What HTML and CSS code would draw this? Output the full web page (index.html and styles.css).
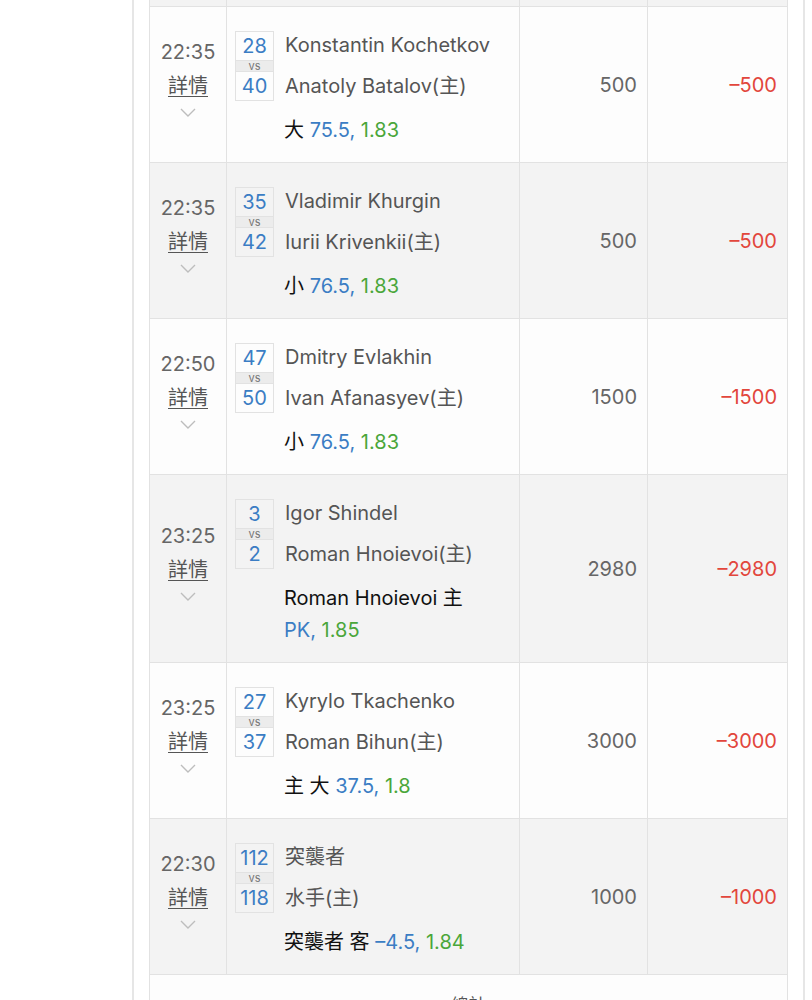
FILE: index.html
```html
<!DOCTYPE html>
<html lang="zh-Hant">
<head>
<meta charset="utf-8">
<title>注單</title>
<link rel="stylesheet" href="styles.css">
</head>
<body>
<div class="page">
  <div class="table">
    <div class="row head">
      <div class="c"></div><div class="c"></div><div class="c"></div><div class="c"></div>
    </div>

    <div class="row">
      <div class="c time"><span class="t">22:35</span><a class="d">詳情</a><span class="chev"><svg width="16" height="9" viewBox="0 0 16 9"><polyline points="1,1 8,8 15,1" fill="none" stroke="#bdbdbd" stroke-width="1.4"/></svg></span></div>
      <div class="c match">
        <div class="top">
          <div class="score"><span class="n">28</span><span class="vs">vs</span><span class="n">40</span></div>
          <div class="names"><div>Konstantin Kochetkov</div><div>Anatoly Batalov(主)</div></div>
        </div>
        <div class="bet"><span class="pick">大</span> <span class="odds"><span class="blue">75.5,</span> <span class="green">1.83</span></span></div>
      </div>
      <div class="c amt">500</div>
      <div class="c res">–500</div>
    </div>

    <div class="row alt">
      <div class="c time"><span class="t">22:35</span><a class="d">詳情</a><span class="chev"><svg width="16" height="9" viewBox="0 0 16 9"><polyline points="1,1 8,8 15,1" fill="none" stroke="#bdbdbd" stroke-width="1.4"/></svg></span></div>
      <div class="c match">
        <div class="top">
          <div class="score"><span class="n">35</span><span class="vs">vs</span><span class="n">42</span></div>
          <div class="names"><div>Vladimir Khurgin</div><div>Iurii Krivenkii(主)</div></div>
        </div>
        <div class="bet"><span class="pick">小</span> <span class="odds"><span class="blue">76.5,</span> <span class="green">1.83</span></span></div>
      </div>
      <div class="c amt">500</div>
      <div class="c res">–500</div>
    </div>

    <div class="row">
      <div class="c time"><span class="t">22:50</span><a class="d">詳情</a><span class="chev"><svg width="16" height="9" viewBox="0 0 16 9"><polyline points="1,1 8,8 15,1" fill="none" stroke="#bdbdbd" stroke-width="1.4"/></svg></span></div>
      <div class="c match">
        <div class="top">
          <div class="score"><span class="n">47</span><span class="vs">vs</span><span class="n">50</span></div>
          <div class="names"><div>Dmitry Evlakhin</div><div>Ivan Afanasyev(主)</div></div>
        </div>
        <div class="bet"><span class="pick">小</span> <span class="odds"><span class="blue">76.5,</span> <span class="green">1.83</span></span></div>
      </div>
      <div class="c amt">1500</div>
      <div class="c res">–1500</div>
    </div>

    <div class="row alt">
      <div class="c time"><span class="t">23:25</span><a class="d">詳情</a><span class="chev"><svg width="16" height="9" viewBox="0 0 16 9"><polyline points="1,1 8,8 15,1" fill="none" stroke="#bdbdbd" stroke-width="1.4"/></svg></span></div>
      <div class="c match">
        <div class="top">
          <div class="score"><span class="n">3</span><span class="vs">vs</span><span class="n">2</span></div>
          <div class="names"><div>Igor Shindel</div><div>Roman Hnoievoi(主)</div></div>
        </div>
        <div class="bet"><span class="pick">Roman Hnoievoi 主</span> <span class="odds"><span class="blue">PK,</span> <span class="green">1.85</span></span></div>
      </div>
      <div class="c amt">2980</div>
      <div class="c res">–2980</div>
    </div>

    <div class="row">
      <div class="c time"><span class="t">23:25</span><a class="d">詳情</a><span class="chev"><svg width="16" height="9" viewBox="0 0 16 9"><polyline points="1,1 8,8 15,1" fill="none" stroke="#bdbdbd" stroke-width="1.4"/></svg></span></div>
      <div class="c match">
        <div class="top">
          <div class="score"><span class="n">27</span><span class="vs">vs</span><span class="n">37</span></div>
          <div class="names"><div>Kyrylo Tkachenko</div><div>Roman Bihun(主)</div></div>
        </div>
        <div class="bet"><span class="pick">主 大</span> <span class="odds"><span class="blue">37.5,</span> <span class="green">1.8</span></span></div>
      </div>
      <div class="c amt">3000</div>
      <div class="c res">–3000</div>
    </div>

    <div class="row alt">
      <div class="c time"><span class="t">22:30</span><a class="d">詳情</a><span class="chev"><svg width="16" height="9" viewBox="0 0 16 9"><polyline points="1,1 8,8 15,1" fill="none" stroke="#bdbdbd" stroke-width="1.4"/></svg></span></div>
      <div class="c match">
        <div class="top">
          <div class="score"><span class="n">112</span><span class="vs">vs</span><span class="n">118</span></div>
          <div class="names"><div>突襲者</div><div>水手(主)</div></div>
        </div>
        <div class="bet"><span class="pick">突襲者 客</span> <span class="odds"><span class="blue">–4.5,</span> <span class="green">1.84</span></span></div>
      </div>
      <div class="c amt">1000</div>
      <div class="c res">–1000</div>
    </div>

    <div class="total">總計</div>
  </div>
</div>
</body>
</html>
```

FILE: styles.css
```css
html, body {
  margin: 0;
  padding: 0;
  background: #ffffff;
}

body {
  font-family: Inter, "Noto Sans CJK TC", sans-serif;
  font-size: 20px;
  color: #555;
}

.page {
  margin-left: 132px;
  width: 639px;
  padding: 0 15px;
  border-left: 2px solid #e6e6e6;
  border-right: 2px solid #e6e6e6;
  min-height: 1000px;
  background: #fff;
}

.table {
  width: 639px;
  box-sizing: border-box;
  border-left: 1px solid #e2e2e2;
  border-right: 1px solid #e2e2e2;
}

.row {
  display: grid;
  grid-template-columns: 76px 293px 128px 140px;
  border-bottom: 1px solid #e2e2e2;
  background: #fdfdfd;
}

.row.alt,
.row.head {
  background: #f3f3f3;
}

.row.head {
  height: 6px;
}

.c {
  box-sizing: border-box;
}

.c + .c {
  border-left: 1px solid #e2e2e2;
}

.time {
  display: flex;
  flex-direction: column;
  align-items: center;
  justify-content: center;
}

.time .t {
  line-height: 34px;
  color: #666;
}

.time .d {
  line-height: 34px;
  color: #555;
  text-decoration: underline;
  text-underline-offset: 3px;
  text-decoration-thickness: 1px;
}

.time .chev {
  height: 32px;
  display: flex;
  justify-content: center;
  align-items: flex-start;
}

.time .chev svg {
  margin-top: 5px;
  display: block;
}

.match {
  padding: 18px 8px 16px 8px;
}

.top {
  display: flex;
  align-items: center;
}

.score {
  width: 39px;
  box-sizing: border-box;
  border: 1px solid #e2e2e2;
  display: flex;
  flex-direction: column;
  text-align: center;
}

.score .n {
  height: 28px;
  line-height: 28px;
  color: #3b7dc4;
  font-size: 20px;
}

.score .vs {
  height: 10px;
  line-height: 10px;
  font-size: 11px;
  color: #777;
  background: #ececec;
  border-top: 1px solid #e2e2e2;
  border-bottom: 1px solid #e2e2e2;
}

.names {
  margin-left: 11px;
}

.names div {
  line-height: 41px;
  color: #555;
  white-space: nowrap;
}

.bet {
  margin-top: 7px;
  padding-left: 49px;
  line-height: 32px;
  color: #111;
}

.odds {
  display: inline-block;
}

.blue {
  color: #3b7dc4;
}

.green {
  color: #4aa63a;
}

.amt,
.res {
  display: flex;
  align-items: center;
  justify-content: flex-end;
  padding-right: 10px;
}

.amt {
  color: #666;
}

.res {
  color: #e2463c;
}

.total {
  text-align: center;
  padding-top: 19px;
  line-height: 22px;
  font-size: 17px;
  color: #555;
  background: #fdfdfd;
  height: 60px;
}
```
